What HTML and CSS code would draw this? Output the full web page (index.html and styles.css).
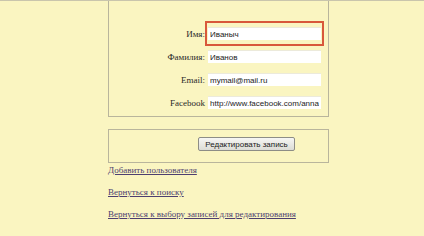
FILE: index.html
```html
<!DOCTYPE html>
<html lang="ru">
<head>
  <meta charset="UTF-8">
  <title>Редактирование записи</title>
  <link rel="stylesheet" href="styles.css">
</head>
<body>
  <div class="page">
    <!-- Форма редактирования -->
    <div class="edit-box">
      <div class="form-row">
        <label class="form-label">Имя:</label>
        <span class="field-wrap highlight"><input class="form-input" type="text" value="Иваныч"></span>
      </div>
      <div class="form-row">
        <label class="form-label">Фамилия:</label>
        <span class="field-wrap"><input class="form-input" type="text" value="Иванов"></span>
      </div>
      <div class="form-row">
        <label class="form-label">Email:</label>
        <span class="field-wrap"><input class="form-input" type="text" value="mymail@mail.ru"></span>
      </div>
      <div class="form-row">
        <label class="form-label">Facebook</label>
        <span class="field-wrap"><input class="form-input" type="text" value="http://www.facebook.com/anna.kovaleva"></span>
      </div>
    </div>

    <!-- Кнопка -->
    <div class="submit-box">
      <button class="submit-btn" type="button">Редактировать запись</button>
    </div>

    <!-- Ссылки -->
    <div class="links">
      <a href="#" class="nav-link">Добавить пользователя</a>
      <a href="#" class="nav-link">Вернуться к поиску</a>
      <a href="#" class="nav-link">Вернуться к выбору записей для редактирования</a>
    </div>
  </div>
</body>
</html>
```

FILE: styles.css
```css
* {
  margin: 0;
  padding: 0;
  box-sizing: border-box;
}

body {
  background: #faf5c1;
  font-family: "Liberation Serif", "Times New Roman", serif;
  color: #333;
  border-top: 1px solid #c9c5ac;
  min-height: 100vh;
}

.page {
  padding-left: 108px;
}

/* Form box */
.edit-box {
  width: 221px;
  border: 1px solid #b9b59c;
  border-top: none;
  padding: 21px 0 2px 0;
}

.form-row {
  display: flex;
  align-items: center;
  height: 23px;
}

.form-label {
  width: 98px;
  text-align: right;
  font-size: 9px;
  color: #2a2a2a;
  padding-right: 2px;
}

.field-wrap {
  position: relative;
  display: block;
  margin-left: 1px;
}

.highlight::after {
  content: "";
  position: absolute;
  top: -6px;
  bottom: -6px;
  left: -3px;
  right: -3px;
  border: 2px solid #d8583b;
}

.form-input {
  display: block;
  width: 113px;
  height: 13px;
  border: none;
  border-top: 1px solid #eceadb;
  background: #fff;
  font-family: "Liberation Sans", Arial, sans-serif;
  font-size: 8px;
  color: #222;
  padding: 0 2px;
  outline: none;
}

/* Submit box */
.submit-box {
  width: 221px;
  height: 34px;
  margin-top: 12px;
  border: 1px solid #b9b59c;
  padding: 7px 0 0 89px;
}

.submit-btn {
  display: block;
  width: 97px;
  height: 14px;
  white-space: nowrap;
  font-family: "Liberation Sans", Arial, sans-serif;
  font-size: 8px;
  color: #222;
  background: linear-gradient(#f6f6f4, #dcdcd6);
  border: 1px solid #8d8d86;
  border-radius: 2px;
}

/* Links */
.links {
  padding-top: 1px;
}

.nav-link {
  display: block;
  width: max-content;
  font-size: 9px;
  line-height: 12px;
  color: #4d3f70;
  margin-bottom: 9.75px;
}
```
